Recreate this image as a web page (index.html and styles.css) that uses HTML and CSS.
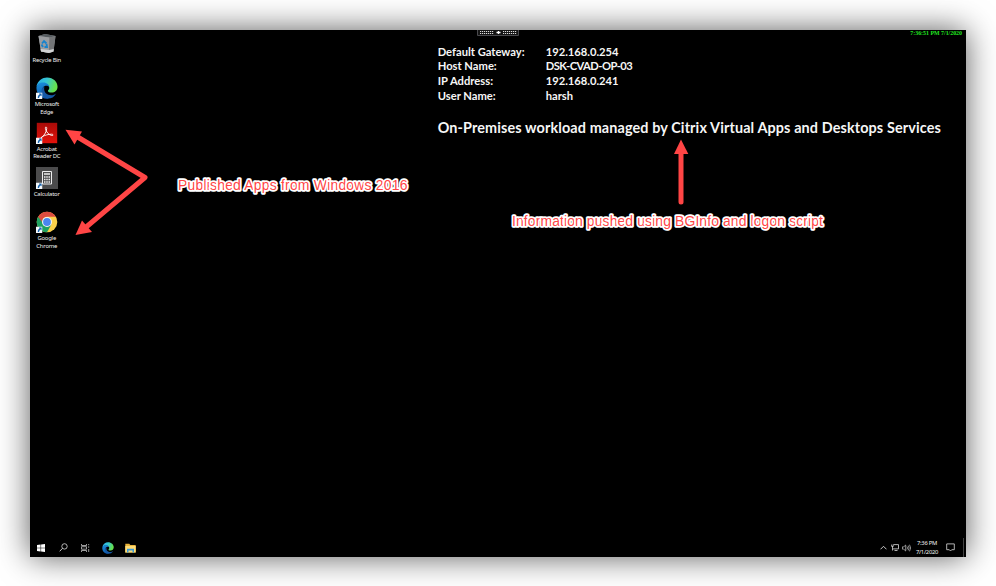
FILE: index.html
```
<!DOCTYPE html>
<html lang="en">
<head>
<meta charset="utf-8">
<title>Remote desktop</title>
<link rel="stylesheet" href="styles.css">
</head>
<body>
<svg class="defs" width="0" height="0" aria-hidden="true">
  <defs>
    <linearGradient id="eg1" x1="0" y1="0" x2="1" y2="0.3"><stop offset="0" stop-color="#2aa9e8"/><stop offset=".5" stop-color="#36c6d3"/><stop offset="1" stop-color="#66e04b"/></linearGradient>
    <linearGradient id="eg2" x1="0" y1="0" x2="0.3" y2="1"><stop offset="0" stop-color="#1b93df"/><stop offset="1" stop-color="#0f58ac"/></linearGradient>
    <linearGradient id="pdf" x1="0" y1="0" x2="0" y2="1"><stop offset="0" stop-color="#a80b08"/><stop offset="1" stop-color="#e3120b"/></linearGradient>
    <symbol id="edge" viewBox="0 0 24 24">
      <path d="M.5 10C2 4 7 .5 12 .5c7 0 11.500 5 11.500 10 0 4-3 6.500-6.500 6.500-3 0-4-1-4-2 0-1 1.500-1 1.500-3 0-3-3-5-6.500-5C4.500 7 2 8 .5 10z" fill="url(#eg1)"/>
      <path d="M.5 12c0-4 3-6 7.500-6 4 0 6.500 3 6.500 5-1-1.500-2-1.500-3-1.500C8 9.500 7 12 7 14c0 4 3 8 7 9.500C6 25 .5 18.500.5 12z" fill="url(#eg2)"/>
      <path d="M9 11c-1 6 3 9 7.500 9 2.500 0 4-1 5.500-2-2 4-5.500 5.500-8.500 5.500-5 0-7.500-4.500-7.500-8.500 0-2.500 1.500-4 3-4z" fill="#1559a5"/>
    </symbol>
    <symbol id="shortcut" viewBox="0 0 7 7">
      <path d="M0 0h7v7H0z" fill="#f4f8fc"/><path d="M3 1h3v3L5 3.200C3.800 4 3.300 4.800 3.400 6L1.900 6C1.800 4.300 2.500 3 3.900 2z" fill="#1763ad"/>
    </symbol>
  </defs>
</svg>
<main class="desktop">
  <nav class="icons">
    <div class="item">
      <svg class="icon" viewBox="0 0 22 22"><path d="M2.500 3L9 1l10.500 2-2 15.500L13 20l-8-1.500z" fill="#858789"/><path d="M2.500 3L9 1l10.500 2-6 1.500z" fill="#555b5f"/><path d="M2.500 3l11 1.500L13 20l-8-1.500z" fill="#9b9da0"/><path d="M13.500 4.500l6-1.500-2 15.500L13 20z" fill="#737577"/><path d="M4.600 16l8.500 1 4.700-1-.3 2.500L13 20l-8-1.500z" fill="#d1d3d4"/><path d="M6 10.500l2-2.500 2.500 2.500M10.500 11l.5 3H8.500M7 14l-1.500-2.500" fill="none" stroke="#1683ce" stroke-width="1.800"/></svg>
      <span>Recycle Bin</span>
    </div>
    <div class="item">
      <svg class="icon" viewBox="0 0 22 22"><use href="#edge" width="22" height="22"/><use href="#shortcut" y="15.500" width="6.500" height="6.500"/></svg>
      <span>Microsoft<br>Edge</span>
    </div>
    <div class="item">
      <svg class="icon" viewBox="0 0 22 22"><path d="M.8.800h20.400v20.400H.8z" fill="url(#pdf)"/><path d="M5 16c3-2 5.500-6 5.700-9.500.1-2.200-1.700-2-1.300 0 .7 3.500 3.600 6.500 6.300 7 2 .3 1.800-1.300-.2-1.300-3.500.1-6.500 1-8.800 2.200-2.300 1.300-2.200 2.500-1 1.500" fill="none" stroke="#fff" stroke-width=".9"/><use href="#shortcut" y="15.500" width="6.500" height="6.500"/></svg>
      <span>Acrobat<br>Reader DC</span>
    </div>
    <div class="item">
      <svg class="icon" viewBox="0 0 22 22"><path d="M0 0h22v22H0z" fill="#4b4b4c"/><path d="M6.500 4.500h9v12.500h-9z" fill="none" stroke="#eee"/><path d="M8 7h6" stroke="#eee" stroke-width="1.500"/><path d="M8 10h6M8 12.500h6M8 15h6" stroke="#eee" stroke-width="1.400" stroke-dasharray="1.500 .75"/><use href="#shortcut" y="15.500" width="6.500" height="6.500"/></svg>
      <span>Calculator</span>
    </div>
    <div class="item">
      <svg class="icon" viewBox="0 0 22 22"><circle cx="11" cy="11" r="10.300" fill="#fbd04b"/><path d="M2.080 5.850A10.300 10.300 0 0 0 11 21.300l4.300-7.600L11 11z" fill="#1fa261"/><path d="M2.080 5.850A10.300 10.300 0 0 1 19.920 5.850H11A5 5 0 0 0 6 11z" fill="#dc4c40"/><circle cx="11" cy="11" r="5" fill="#f4f4f4"/><circle cx="11" cy="11" r="3.900" fill="#4a86ee"/><use href="#shortcut" y="15.500" width="6.500" height="6.500"/></svg>
      <span>Google<br>Chrome</span>
    </div>
  </nav>

  <section class="info">
    <dl>
      <dt>Default Gateway:</dt><dd>192.168.0.254</dd>
      <dt>Host Name:</dt><dd class="host">DSK-CVAD-OP-03</dd>
      <dt>IP Address:</dt><dd>192.168.0.241</dd>
      <dt>User Name:</dt><dd>harsh</dd>
    </dl>
    <h1>On-Premises workload managed by Citrix Virtual Apps and Desktops Services</h1>
  </section>

  <svg class="handle" viewBox="0 0 42 6"><path d="M.5 0v5.500h41V0" fill="#141414" stroke="#4a4a4e"/><path d="M3 1.500h13.500M3 3.500h13.500M26 1.500h13.500M26 3.500h13.500" stroke="#ddd" stroke-dasharray="1.200 .8"/><path d="M19.500 2.500h4M21.500 1v3" stroke="#fff" stroke-width="1.300"/></svg>
  <div class="stamp">7:36:51 PM 7/1/2020</div>

  <svg class="marks" viewBox="30 30 936 527">
    <g fill="none" stroke="#ff4545" stroke-width="5" stroke-linecap="round" stroke-linejoin="round">
      <path d="M76 136L145 177.500L85 228"/>
      <path d="M681 150V202"/>
    </g>
    <g fill="#ff4545"><path d="M65.500 129.800L82 131.500L74.500 144.500z"/><path d="M75.500 235L82 220.500L92 232z"/><path d="M681 139.500L688.300 154H674z"/></g>
    <g class="note">
      <text x="178" y="190" textLength="229.500">Published Apps from Windows 2016</text>
      <text x="512" y="226" textLength="311">Information pushed using BGInfo and logon script</text>
    </g>
  </svg>

  <footer class="taskbar">
    <svg class="tb start" viewBox="0 0 8 8"><path d="M0 1.100l3.600-.5v3.200H0zM4.100.500L8 0v3.800H4.100zM0 4.300h3.600v3.200L0 7zM4.100 4.300H8V8l-3.900-.5z" fill="#fff"/></svg>
    <svg class="tb search" viewBox="0 0 9 9"><circle cx="5.500" cy="3.400" r="2.700" fill="none" stroke="#ddd" stroke-width=".8"/><path d="M3.500 5.300L.7 8.300" stroke="#ddd" stroke-width=".9"/></svg>
    <svg class="tb view" viewBox="0 0 9 8"><path d="M.5 0v1.500h5V0M.5 8V6.500h5V8M.5 2.700h5v2.500h-5zM7.700 0v1.200M7.700 2.300v1.500M7.700 5v3" fill="none" stroke="#c4c4c4" stroke-width=".8"/></svg>
    <svg class="tb edge"><use href="#edge" width="12" height="12"/></svg>
    <svg class="tb folder" viewBox="0 0 11 10"><path d="M.3.800h4l1 1.200h5.400v7.500H.3z" fill="#e9b43b"/><path d="M.3 3h10.400v6.500H.3z" fill="#ffdc76"/><path d="M2 9.500V5.700h7v3.800H7.500V7.500h-4v2z" fill="#3999d8"/></svg>
    <div class="tray">
      <svg class="chev" viewBox="0 0 7 5"><path d="M.5 4.300l3-3 3 3" fill="none" stroke="#ddd" stroke-width=".9"/></svg>
      <svg class="net" viewBox="0 0 8 7"><path d="M2.500.600h5v4.300H2M.7.500v2h1.500v-2M1.500 2.500v4M3.500 6.500h3" fill="none" stroke="#ddd" stroke-width=".8"/></svg>
      <svg class="vol" viewBox="0 0 9 8"><path d="M.5 2.800h1.300L3.700 1v6L1.800 5.200H.5zM5 2.500q1 1.500 0 3M6.300 1.600q1.600 2.400 0 4.800M7.500.700q2.300 3.300 0 6.600" fill="none" stroke="#ccc" stroke-width=".7"/></svg>
      <div class="clock">7:36 PM<br>7/1/2020</div>
      <svg class="action" viewBox="0 0 9 9"><path d="M.7.900h7.600v5.800H5.700L4.500 8 3.300 6.700H.7z" fill="none" stroke="#ddd" stroke-width=".8"/></svg>
      <i class="peek"></i>
    </div>
  </footer>
</main>
</body>
</html>
```
FILE: styles.css
```
* { box-sizing: border-box; }
body {
  margin: 0;
  padding: 30px;
  height: 586px;
  background: #fff;
  overflow: hidden;
}
.defs { position: absolute; }
.desktop {
  position: relative;
  display: grid;
  grid-template: 1fr 19px / 398px 1fr;
  width: 936px;
  height: 527px;
  background: #000;
  color: #fff;
  box-shadow: 0 0 30px rgba(0, 0, 0, .65);
}
.icons { padding-top: 2.500px; width: 33.500px; }
.item {
  height: 44.7px;
  display: flex;
  flex-direction: column;
  align-items: center;
  color: #f0f0f0;
  font: 5.9px/7.2px "Noto Sans", sans-serif;
  letter-spacing: -.22px;
  text-align: center;
  white-space: nowrap;
}
.icon { width: 22px; height: 22px; flex: none; margin-bottom: 2.200px; }
.info { padding: 14.700px 0 0 9.700px; font-family: Lato, sans-serif; font-weight: 700; color: #f6f6f6; }
dl {
  display: grid;
  grid-template-columns: 108px 1fr;
  grid-auto-rows: 14.7px;
  margin: 0;
  font-size: 11.2px;
  line-height: 14.7px;
}
dd { margin: 0; }
.host { letter-spacing: -.55px; }
h1 { margin: 14.300px 0 0; font-size: 14.4px; letter-spacing: .12px; line-height: 20px; white-space: nowrap; }
.handle { position: absolute; left: 447px; top: 0; width: 42px; height: 6px; }
.stamp {
  position: absolute;
  right: 4px;
  top: 0;
  color: #20e820;
  font: 700 5.9px/7px "Liberation Serif", serif;
}
.marks { position: absolute; left: 0; top: 0; width: 936px; height: 527px; }
.note {
  font: 14px "Liberation Sans", sans-serif;
  fill: #ff4545;
  stroke: #fff;
  stroke-width: 3.500px;
  stroke-linejoin: round;
  paint-order: stroke;
}
.taskbar {
  grid-column: 1 / -1;
  display: flex;
  align-items: center;
  padding-left: 7px;
}
.tb { flex: none; }
.start { width: 8px; height: 8px; }
.search { width: 9px; height: 9px; margin-left: 14px; }
.view { width: 9px; height: 8px; margin-left: 13px; }
.edge { width: 12px; height: 12px; margin-left: 12px; }
.folder { width: 11px; height: 10px; margin-left: 11px; }
.tray { display: flex; align-items: center; margin-left: auto; height: 19px; }
.chev { width: 7px; height: 5px; margin-right: 4px; }
.net { width: 8px; height: 7px; margin-right: 3px; }
.vol { width: 9px; height: 8px; margin-right: 4px; }
.clock { width: 24px; text-align: center; color: #f4f4f4; font: 5.8px/8.500px "Noto Sans", sans-serif; letter-spacing: -.25px; white-space: nowrap; }
.action { width: 9px; height: 9px; margin: 0 8px 0 7px; }
.peek { width: 2px; height: 19px; margin-right: 1px; border-left: 1px solid #444; }
```
